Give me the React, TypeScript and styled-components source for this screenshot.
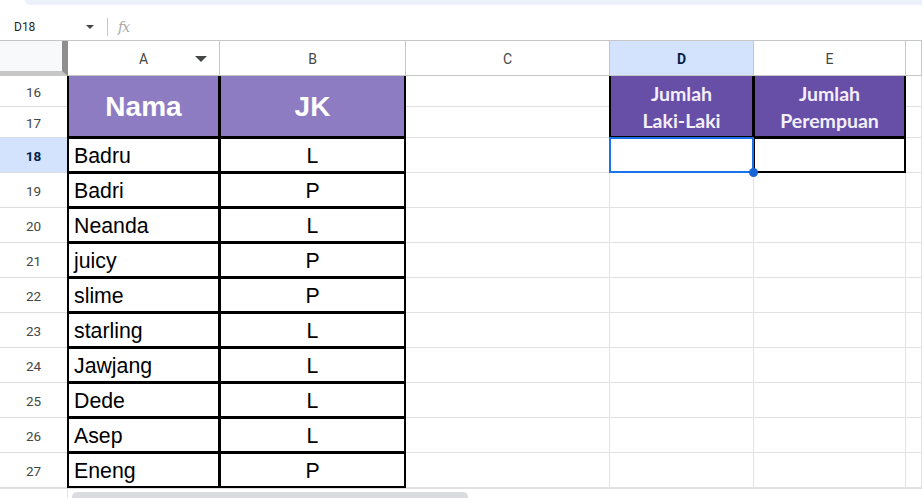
import React from "react";
import styled, { createGlobalStyle, css } from "styled-components";

const GlobalStyle = createGlobalStyle`
  html, body { margin: 0; padding: 0; background: #fff; }
  body { font-family: Roboto, "Liberation Sans", sans-serif; }
`;

const Page = styled.div`
  width: 922px;
  height: 498px;
  overflow: hidden;
  background: #fff;
  display: flex;
  flex-direction: column;
`;

const TopStrip = styled.div`
  flex: none;
  height: 5px;
  margin-left: 25px;
  background: #edf2fa;
  border-bottom-left-radius: 6px;
`;

const FormulaBar = styled.div`
  flex: none;
  height: 36px;
  box-sizing: border-box;
  padding-top: 8px;
  display: flex;
  align-items: center;
  border-bottom: 1px solid #c4c7c5;
`;

const NameBox = styled.div`
  width: 101px;
  box-sizing: border-box;
  padding: 0 7px 0 14px;
  display: flex;
  align-items: center;
  font-size: 12px;
  color: #1f1f1f;
`;

const Caret = styled.span<{ $size?: number }>`
  margin-left: auto;
  width: 0;
  height: 0;
  border-left: ${(p) => p.$size ?? 4}px solid transparent;
  border-right: ${(p) => p.$size ?? 4}px solid transparent;
  border-top: ${(p) => p.$size ?? 4}px solid #444746;
`;

const Divider = styled.div`
  width: 1px;
  height: 18px;
  margin-left: 6px;
  background: #c4c7c5;
`;

const Fx = styled.span`
  margin-left: 10px;
  font-family: "DejaVu Serif", serif;
  font-style: italic;
  font-size: 14px;
  color: #a8a8a8;
  letter-spacing: -1px;
`;

const Sheet = styled.div`
  flex: none;
  display: grid;
  grid-template-columns: 68px 152px 186px 204px 144px 152px 16px;
  grid-template-rows: 35px 31px 31px repeat(10, 35px);
`;

const Corner = styled.div`
  box-sizing: border-box;
  background: #f8f9fa;
  border-right: 6px solid #8e8e8e;
  border-bottom: 5px solid #c7c7c7;
`;

const ColHead = styled.div<{ $active?: boolean }>`
  position: relative;
  box-sizing: border-box;
  display: flex;
  align-items: center;
  justify-content: center;
  padding-top: 2px;
  border-right: 1px solid #c4c7c5;
  border-bottom: 1px solid #c4c7c5;
  font-size: 14px;
  color: #444746;
  background: #fff;
  ${(p) =>
    p.$active &&
    css`
      background: #d3e3fd;
      color: #041e49;
      font-weight: 700;
    `}
`;

const FilterCaret = styled.span`
  position: absolute;
  right: 12px;
  top: 15px;
  width: 0;
  height: 0;
  border-left: 6px solid transparent;
  border-right: 6px solid transparent;
  border-top: 6px solid #444746;
`;

const RowHead = styled.div<{ $active?: boolean }>`
  box-sizing: border-box;
  display: flex;
  align-items: center;
  justify-content: center;
  padding-top: 2px;
  border-right: 1px solid #c4c7c5;
  border-bottom: 1px solid #dadce0;
  font-size: 13.5px;
  color: #444746;
  background: #fff;
  ${(p) =>
    p.$active &&
    css`
      background: #d3e3fd;
      color: #041e49;
      font-weight: 700;
    `}
`;

type Frame = "black" | "blue";

const Cell = styled.div<{
  $frame?: Frame;
  $openTop?: boolean;
  $center?: boolean;
  $span?: number;
}>`
  position: relative;
  box-sizing: border-box;
  display: flex;
  align-items: center;
  justify-content: ${(p) => (p.$center ? "center" : "flex-start")};
  padding: 3px 6px 0;
  border-right: 1px solid #e2e2e2;
  border-bottom: 1px solid #e2e2e2;
  font-family: "Liberation Sans", Arial, sans-serif;
  font-size: 21.3px;
  color: #000;
  grid-row: ${(p) => (p.$span ? `span ${p.$span}` : "auto")};
  ${(p) =>
    p.$frame &&
    css`
      &::after {
        content: "";
        position: absolute;
        inset: ${p.$openTop ? "0" : "-1px"} -1px -1px -1px;
        border: 2px solid ${p.$frame === "blue" ? "#1a73e8" : "#000"};
        border-top-width: ${p.$openTop ? "0" : "2px"};
        pointer-events: none;
        z-index: ${p.$frame === "blue" ? 2 : 1};
      }
    `}
`;

const HeadCell = styled(Cell)<{ $tone: "light" | "dark" }>`
  justify-content: center;
  text-align: center;
  color: #fff;
  font-weight: 700;
  background: ${(p) => (p.$tone === "light" ? "#8e7cc3" : "#674ea7")};
  ${(p) =>
    p.$tone === "light"
      ? css`
          font-size: 28px;
          padding-top: 0;
        `
      : css`
          font-family: Lato, "Open Sans", sans-serif;
          font-size: 19.5px;
          line-height: 27px;
          padding-top: 1px;
          color: #f4f0fb;
        `}
`;

const FillHandle = styled.span`
  position: absolute;
  right: -5px;
  bottom: -5px;
  width: 9px;
  height: 9px;
  border-radius: 50%;
  background: #1a66d6;
  z-index: 3;
`;

const ScrollArea = styled.div`
  flex: 1;
  display: flex;
  border-top: 1px solid #e0e0e0;
`;

const ScrollGutter = styled.div`
  width: 68px;
  box-sizing: border-box;
  border-right: 1px solid #e2e2e2;
`;

const Thumb = styled.div`
  margin: 3px 0 0 4px;
  width: 396px;
  background: #dadce0;
  border-radius: 5px 5px 0 0;
`;

const people: [string, string][] = [
  ["Badru", "L"],
  ["Badri", "P"],
  ["Neanda", "L"],
  ["juicy", "P"],
  ["slime", "P"],
  ["starling", "L"],
  ["Jawjang", "L"],
  ["Dede", "L"],
  ["Asep", "L"],
  ["Eneng", "P"],
];

const App = () => {
  return (
    <Page>
      <GlobalStyle />
      <TopStrip />
      <FormulaBar>
        <NameBox>
          D18
          <Caret />
        </NameBox>
        <Divider />
        <Fx>fx</Fx>
      </FormulaBar>

      <Sheet>
        <Corner />
        <ColHead>
          A
          <FilterCaret />
        </ColHead>
        <ColHead>B</ColHead>
        <ColHead>C</ColHead>
        <ColHead $active>D</ColHead>
        <ColHead>E</ColHead>
        <ColHead />

        <RowHead>16</RowHead>
        <HeadCell $tone="light" $span={2} $frame="black" $openTop>
          Nama
        </HeadCell>
        <HeadCell $tone="light" $span={2} $frame="black" $openTop>
          JK
        </HeadCell>
        <Cell />
        <HeadCell $tone="dark" $span={2} $frame="black" $openTop>
          Jumlah
          <br />
          Laki-Laki
        </HeadCell>
        <HeadCell $tone="dark" $span={2} $frame="black" $openTop>
          Jumlah
          <br />
          Perempuan
        </HeadCell>
        <Cell />

        <RowHead>17</RowHead>
        <Cell />
        <Cell />

        {people.map(([name, jk], i) => {
          const row = 18 + i;
          const first = i === 0;
          return (
            <React.Fragment key={row}>
              <RowHead $active={first}>{row}</RowHead>
              <Cell $frame="black">{name}</Cell>
              <Cell $frame="black" $center>
                {jk}
              </Cell>
              <Cell />
              {first ? (
                <>
                  <Cell $frame="blue">
                    <FillHandle />
                  </Cell>
                  <Cell $frame="black" />
                </>
              ) : (
                <>
                  <Cell />
                  <Cell />
                </>
              )}
              <Cell />
            </React.Fragment>
          );
        })}
      </Sheet>

      <ScrollArea>
        <ScrollGutter />
        <Thumb />
      </ScrollArea>
    </Page>
  );
};

export default App;
